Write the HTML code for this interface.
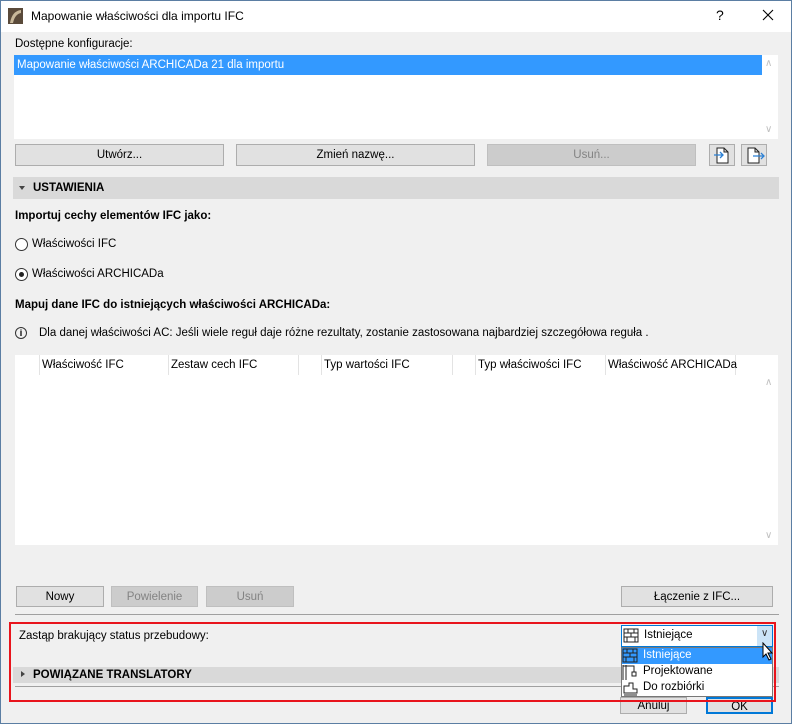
<!DOCTYPE html>
<html><head><meta charset="utf-8"><style>
*{box-sizing:border-box;margin:0;padding:0}
body{width:792px;height:724px;overflow:hidden;background:#f0f0f0;font-family:"Liberation Sans",sans-serif;font-size:11.5px;color:#000;position:relative}
.a{position:absolute;white-space:nowrap}
.win{position:absolute;left:0;top:0;width:792px;height:724px;border:1px solid #5b7ea3;pointer-events:none}
.btn{position:absolute;background:#e1e1e1;border:1px solid #adadad;text-align:center;line-height:20px}
.dis{background:#cccccc;border-color:#bfbfbf;color:#838383}
.bar{position:absolute;background:#d9d9d9;font-weight:bold;line-height:22px;padding-left:20px}
.tri{position:absolute;left:6px;top:9px;width:0;height:0;border-left:3px solid transparent;border-right:3px solid transparent;border-top:4px solid #444}
.radio{position:absolute;width:13px;height:13px;border:1px solid #333;border-radius:50%;background:#fff}
.sep{position:absolute;top:0;width:1px;height:20px;background:#e3e3e3}
</style></head><body>
<div class="a" style="left:0;top:0;width:792px;height:32px;background:#fff"></div>
<svg class="a" style="left:8px;top:8px" width="15" height="16"><rect width="15" height="16" fill="#5a4a3a"/><path d="M2 15 Q4 3 13 2 L13 5 Q7 6 5 15Z" fill="#c8b89a"/></svg>
<div class="a" style="left:31px;top:9px;font-size:12px">Mapowanie właściwości dla importu IFC</div>
<div class="a" style="left:716px;top:7px;font-size:14px">?</div>
<svg class="a" style="left:762px;top:9px" width="12" height="12"><path d="M1 1L11 11M11 1L1 11" stroke="#000" stroke-width="1.1"/></svg>

<div class="a" style="left:15px;top:38px">Dostępne konfiguracje:</div>
<div class="a" style="left:14px;top:55px;width:764px;height:84px;background:#fff"></div>
<div class="a" style="left:14px;top:55px;width:748px;height:20px;background:#3399ff;color:#fff;padding-left:3px;line-height:20px">Mapowanie właściwości ARCHICADa 21 dla importu</div>
<div class="a" style="left:765px;top:58px;color:#c0c0c0;font-size:10px">∧</div>
<div class="a" style="left:765px;top:124px;color:#c0c0c0;font-size:10px">∨</div>

<div class="btn" style="left:15px;top:144px;width:209px;height:22px">Utwórz...</div>
<div class="btn" style="left:236px;top:144px;width:239px;height:22px">Zmień nazwę...</div>
<div class="btn dis" style="left:487px;top:144px;width:209px;height:22px">Usuń...</div>
<div class="btn" style="left:709px;top:144px;width:26px;height:22px"></div>
<div class="btn" style="left:741px;top:144px;width:26px;height:22px"></div>
<svg class="a" style="left:714px;top:147px" width="16" height="17"><path d="M3 1H10L14 5V16H3Z M10 1V5H14" fill="#fff" stroke="#222"/><path d="M0 8H9M6 5L9 8L6 11" fill="none" stroke="#2a7fd4" stroke-width="1.3"/></svg>
<svg class="a" style="left:747px;top:147px" width="18" height="17"><path d="M1 1H8L12 5V16H1Z M8 1V5H12" fill="#fff" stroke="#222"/><path d="M6 9H17M14 6L17 9L14 12" fill="none" stroke="#2a7fd4" stroke-width="1.3"/></svg>

<div class="bar" style="left:13px;top:177px;width:766px;height:22px">USTAWIENIA<div class="tri"></div></div>

<div class="a" style="left:15px;top:210px;font-weight:bold">Importuj cechy elementów IFC jako:</div>
<div class="radio" style="left:15px;top:238px"></div>
<div class="a" style="left:32px;top:238px">Właściwości IFC</div>
<div class="radio" style="left:15px;top:268px"><div style="position:absolute;left:3px;top:3px;width:5px;height:5px;border-radius:50%;background:#222"></div></div>
<div class="a" style="left:32px;top:268px">Właściwości ARCHICADa</div>
<div class="a" style="left:15px;top:299px;font-weight:bold">Mapuj dane IFC do istniejących właściwości ARCHICADa:</div>
<div class="a" style="left:15px;top:327px;width:12px;height:12px;border:1px solid #333;border-radius:50%;font-size:9px;text-align:center;line-height:10px;font-weight:bold">i</div>
<div class="a" style="left:39px;top:327px">Dla danej właściwości AC: Jeśli wiele reguł daje różne rezultaty, zostanie zastosowana najbardziej szczegółowa reguła .</div>

<div class="a" style="left:15px;top:355px;width:763px;height:190px;background:#fff"></div>
<div class="a" style="left:15px;top:355px;width:745px;height:20px">
<div class="sep" style="left:24px"></div><div class="sep" style="left:153px"></div><div class="sep" style="left:283px"></div><div class="sep" style="left:306px"></div><div class="sep" style="left:437px"></div><div class="sep" style="left:460px"></div><div class="sep" style="left:590px"></div><div class="sep" style="left:720px"></div>
<div class="a" style="left:27px;top:4px">Właściwość IFC</div>
<div class="a" style="left:156px;top:4px">Zestaw cech IFC</div>
<div class="a" style="left:309px;top:4px">Typ wartości IFC</div>
<div class="a" style="left:463px;top:4px">Typ właściwości IFC</div>
<div class="a" style="left:593px;top:4px">Właściwość ARCHICADa</div>
</div>
<div class="a" style="left:765px;top:377px;color:#c0c0c0;font-size:10px">∧</div>
<div class="a" style="left:765px;top:530px;color:#c0c0c0;font-size:10px">∨</div>

<div class="btn" style="left:16px;top:586px;width:88px;height:21px">Nowy</div>
<div class="btn dis" style="left:111px;top:586px;width:87px;height:21px">Powielenie</div>
<div class="btn dis" style="left:206px;top:586px;width:88px;height:21px">Usuń</div>
<div class="btn" style="left:621px;top:586px;width:152px;height:21px">Łączenie z IFC...</div>
<div class="a" style="left:15px;top:614px;width:764px;height:1px;background:#a0a0a0"></div>

<div class="a" style="left:19px;top:630px">Zastąp brakujący status przebudowy:</div>
<div class="bar" style="left:13px;top:667px;width:766px;height:16px;line-height:16px">POWIĄZANE TRANSLATORY<div class="tri" style="top:4px;left:8px;border:none;border-top:3px solid transparent;border-bottom:3px solid transparent;border-left:4px solid #444"></div></div>
<div class="a" style="left:15px;top:686px;width:764px;height:1px;background:#a0a0a0"></div>
<div class="btn" style="left:620px;top:697px;width:67px;height:17px;line-height:17px">Anuluj</div>
<div class="btn" style="left:706px;top:697px;width:67px;height:17px;line-height:17px;border:2px solid #0078d7">OK</div>

<div class="a" style="left:9px;top:622px;width:767px;height:80px;border:2px solid #e8141c"></div>

<div class="a" style="left:621px;top:625px;width:152px;height:22px;background:#fff;border:1px solid #0078d7"></div>
<div class="a" style="left:757px;top:626px;width:15px;height:20px;background:#cce4f7"></div>
<div class="a" style="left:761px;top:628px;font-size:10px;color:#333">∨</div>
<svg class="a" style="left:623px;top:628px" width="16" height="15"><path d="M1 1H15V14H1ZM1 5H15M1 9H15M5 1V5M11 1V5M8 5V9M4 9V14M12 9V14" fill="none" stroke="#222"/></svg>
<div class="a" style="left:644px;top:629px">Istniejące</div>
<div class="a" style="left:621px;top:647px;width:152px;height:50px;background:#fff;border:1px solid #777"></div>
<div class="a" style="left:622px;top:648px;width:150px;height:16px;background:#3399ff"></div>
<svg class="a" style="left:622px;top:648px" width="17" height="48"><path d="M1 1H15V14H1ZM1 5H15M1 9H15M5 1V5M11 1V5M8 5V9M4 9V14M12 9V14" fill="none" stroke="#222"/><path d="M1 17V32M4 17V32M1 18H12V24M10 24H14V28H10Z" fill="none" stroke="#222"/><path d="M2 45V38H7V35H11V41H15V45ZM2 47H15" fill="none" stroke="#222"/></svg>
<div class="a" style="left:643px;top:649px;color:#fff">Istniejące</div>
<div class="a" style="left:643px;top:665px">Projektowane</div>
<div class="a" style="left:643px;top:681px">Do rozbiórki</div>
<svg class="a" style="left:762px;top:642px" width="12" height="19"><path d="M1 1V15L4 12L7 18L9 17L6 11H10Z" fill="#fff" stroke="#000"/></svg>
<div class="win"></div>
</body></html>
